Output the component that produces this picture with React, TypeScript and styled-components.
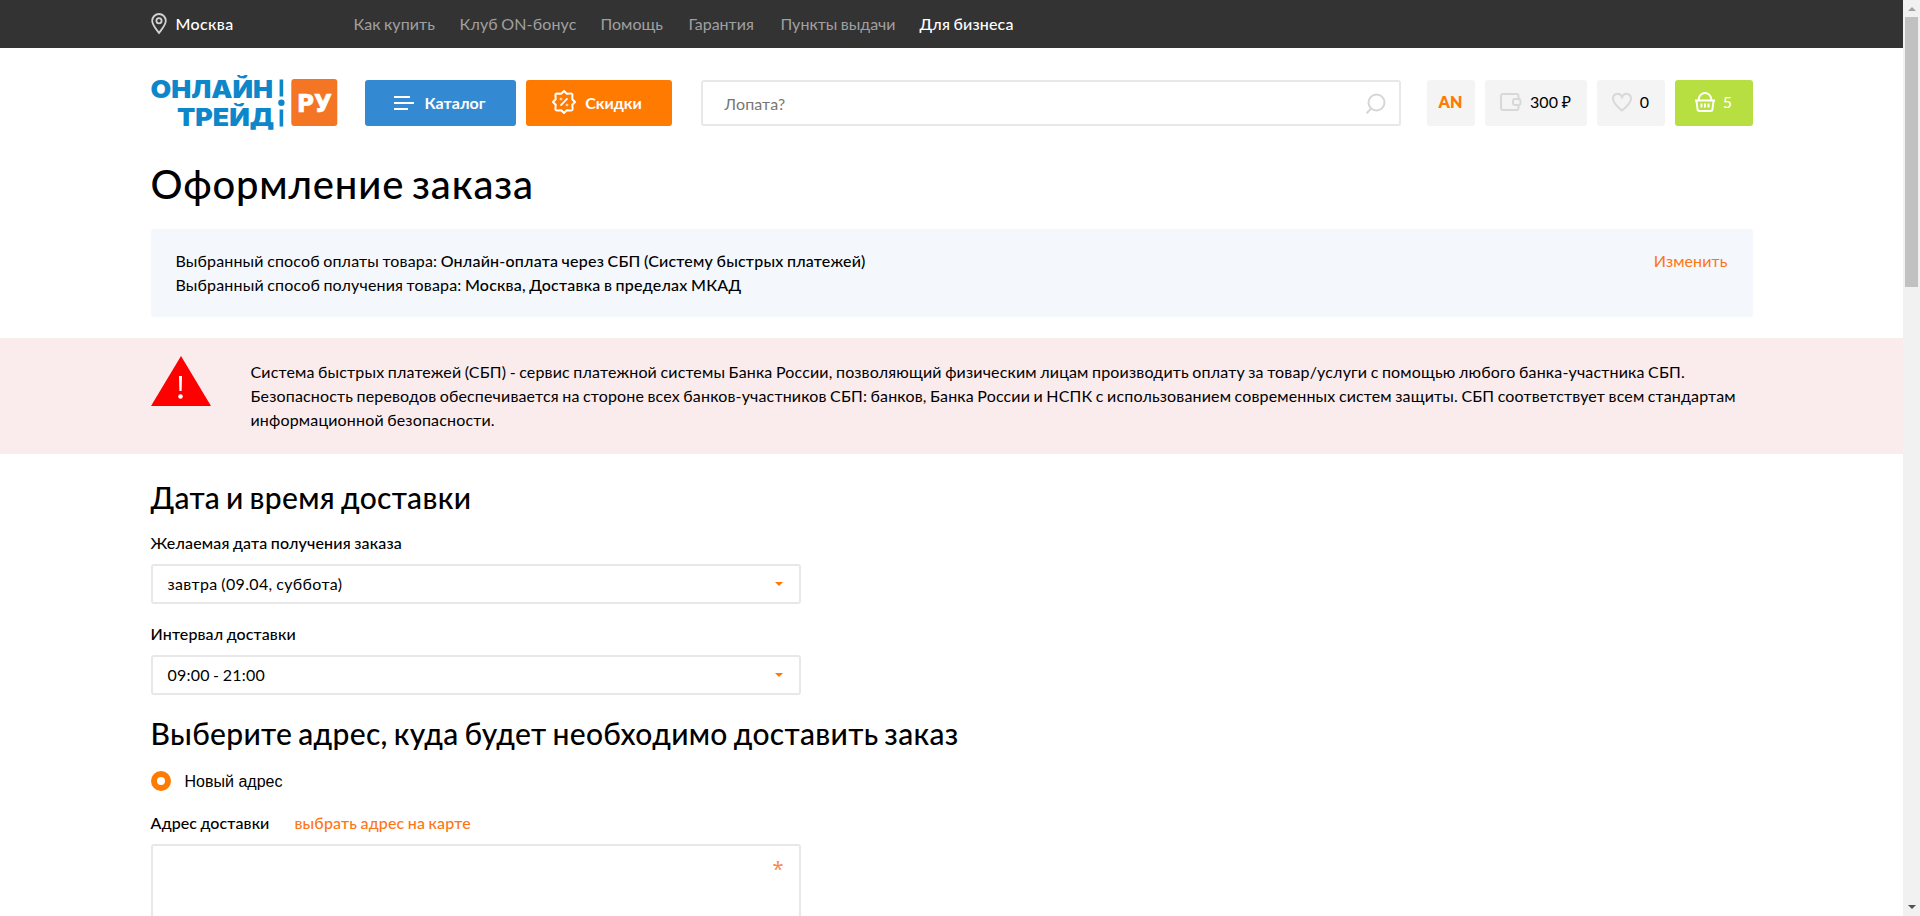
import React from 'react';
import styled, { createGlobalStyle, css } from 'styled-components';

const GlobalStyle = createGlobalStyle`
  * { box-sizing: border-box; }
  body { margin: 0; background: #fff; overflow: hidden; }
`;

const orange = '#ff7a00';

const Viewport = styled.div`
  display: flex;
  height: 916px;
  overflow: hidden;
  color: #000;
  font: 400 16px/24px Lato, 'Noto Sans', sans-serif;
  font-kerning: normal;
  word-spacing: -0.8px;
`;

const Page = styled.div`
  flex: 1;
  min-width: 0;
`;

const container = css`
  width: 1602px;
  margin-left: 150.5px;
`;

const Text = styled.span<{ $track?: number }>`
  letter-spacing: ${p => p.$track ?? 0.16}px;
  white-space: nowrap;
`;

const Strong = styled(Text)`
  font-weight: 500;
`;

/* ---------- top bar ---------- */

const TopBar = styled.div`
  height: 48px;
  background: #333;
`;

const TopBarInner = styled.div`
  ${container}
  display: flex;
  align-items: center;
  height: 48px;
`;

const City = styled.a`
  display: flex;
  align-items: center;
  gap: 9px;
  width: 203px;
  color: #fff;
  font-weight: 500;
`;

const TopNav = styled.nav`
  display: flex;
  gap: 24px;
`;

const TopLink = styled.a<{ $accent?: boolean; $width: number; $track: number }>`
  width: ${p => p.$width}px;
  letter-spacing: ${p => p.$track}px;
  color: ${p => (p.$accent ? '#fff' : '#a0a0a0')};
  font-weight: ${p => (p.$accent ? 500 : 400)};
  white-space: nowrap;
`;

/* ---------- header ---------- */

const Header = styled.header`
  ${container}
  display: flex;
  align-items: center;
  height: 110px;
`;

const Logo = styled.svg`
  display: block;
  margin-right: 27px;
`;

const MainButton = styled.button<{ $color: string; $width: number; $gap: number; $shift?: number }>`
  display: flex;
  align-items: center;
  justify-content: center;
  gap: ${p => p.$gap}px;
  width: ${p => p.$width}px;
  height: 46px;
  margin-right: 10px;
  padding: 0 ${p => p.$shift ?? 0}px 0 0;
  border: 0;
  border-radius: 3px;
  background: ${p => p.$color};
  color: #fff;
  font: 700 16px/24px Lato, sans-serif;
`;

const Search = styled.div`
  display: flex;
  align-items: center;
  justify-content: space-between;
  width: 700px;
  height: 46px;
  margin: 0 26px 0 19px;
  padding: 1px 13px 0 22px;
  border: 2px solid #e8e8e8;
  border-radius: 3px;
  color: #777;
`;

const Counters = styled.div`
  display: flex;
  gap: 10px;
`;

const Counter = styled.a<{ $width: number; $gap?: number; $kind?: 'cart' | 'user' }>`
  display: flex;
  align-items: center;
  justify-content: center;
  gap: ${p => p.$gap ?? 8}px;
  width: ${p => p.$width}px;
  height: 46px;
  padding-bottom: 2px;
  border-radius: 3px;
  background: ${p => (p.$kind === 'cart' ? '#b7df41' : '#f4f4f4')};
  color: ${p => (p.$kind === 'cart' ? '#fff' : p.$kind === 'user' ? orange : '#000')};
  font-weight: ${p => (p.$kind === 'user' ? 800 : 400)};
`;

/* ---------- order summary ---------- */

const Title = styled.h1`
  ${container}
  height: 71px;
  margin-top: 0;
  margin-bottom: 0;
  padding-top: 2px;
  font-size: 40px;
  line-height: 48px;
  font-weight: 500;
  word-spacing: -3px;
`;

const Summary = styled.section`
  ${container}
  display: flex;
  justify-content: space-between;
  height: 88px;
  margin-bottom: 21px;
  padding: 20px 25px;
  border-radius: 3px;
  background: #f4f7fb;
`;

const SummaryLine = styled.p`
  margin: 0;
`;

const ActionLink = styled.a<{ $bold?: boolean }>`
  color: #ff7514;
  font-weight: ${p => (p.$bold ? 500 : 400)};
`;

const Alert = styled.section`
  height: 116px;
  background: #faebec;
`;

const AlertInner = styled.div`
  ${container}
  display: flex;
  gap: 40px;
  padding-top: 18px;
`;

const AlertText = styled.p`
  margin: 4px 0 0;
`;

/* ---------- form ---------- */

const Form = styled.form`
  ${container}
  padding-top: 25px;
`;

const SectionTitle = styled.h2<{ $after: number }>`
  margin: 0 0 ${p => p.$after}px;
  font-size: 30px;
  line-height: 36px;
  font-weight: 500;
  word-spacing: -2px;
`;

const Field = styled.div<{ $after: number }>`
  width: 650px;
  margin-bottom: ${p => p.$after}px;
`;

const FieldLabel = styled.div`
  display: flex;
  gap: 25px;
  margin-bottom: 9px;
  font-weight: 500;
`;

const Select = styled.div`
  display: flex;
  align-items: center;
  justify-content: space-between;
  height: 40px;
  padding: 0 16px 0 15px;
  border: 2px solid #e8e8e8;
  border-radius: 3px;
`;

const Caret = styled.i`
  border: solid transparent;
  border-width: 4px 4px 0;
  border-top-color: ${orange};
`;

const RadioRow = styled.label`
  display: flex;
  align-items: center;
  gap: 14px;
  height: 24px;
  margin-bottom: 18px;
  font-family: 'Liberation Sans', sans-serif;
  word-spacing: 0;
`;

const RadioMark = styled.i`
  width: 20px;
  height: 20px;
  border: 6px solid ${orange};
  border-radius: 50%;
`;

const RadioText = styled(Text)`
  padding-top: 2px;
`;

const AddressBox = styled.div`
  display: flex;
  justify-content: flex-end;
  height: 110px;
  padding: 11px 15px;
  border: 2px solid #e8e8e8;
  border-radius: 3px;
  color: #f58a45;
  font: 400 20px/24px 'Noto Sans', sans-serif;
`;

/* ---------- page scrollbar ---------- */

const Scrollbar = styled.aside`
  display: flex;
  flex-direction: column;
  align-items: center;
  justify-content: space-between;
  width: 17px;
  padding: 7px 0;
  background: #f1f1f1;
`;

const ScrollThumb = styled.div`
  width: 13px;
  height: 270px;
  margin: 6px 0 auto;
  background: #c1c1c1;
`;

const ScrollArrow = styled.i<{ $down?: boolean }>`
  border: solid transparent;
  ${p =>
    p.$down
      ? css`border-width: 4px 4px 0; border-top-color: #505050;`
      : css`border-width: 0 4px 4px; border-bottom-color: #a3a3a3;`}
`;

const PinIcon = () => (
  <svg width="16" height="22" viewBox="0 0 16 22" fill="none" stroke="#d2d2d2" strokeWidth="1.8">
    <path d="M8 20C5 15.8 1.2 12 1.2 7.8a6.8 6.8 0 0 1 13.6 0C14.800 12 11 15.800 8 20Z" />
    <circle cx="8" cy="7.800" r="2.600" />
  </svg>
);

const MenuIcon = () => (
  <svg width="20" height="16" viewBox="0 0 20 16" fill="#fff">
    <path d="M0 1h16v2H0zM0 7h20v2H0zM0 13h14v2H0z" />
  </svg>
);

const PercentIcon = () => (
  <svg width="24" height="26" viewBox="0 0 24 26" fill="none" stroke="#fff" strokeWidth="2" strokeLinejoin="round" strokeLinecap="round">
    <path d="M12 1 L14.800 3.700 L18.800 3.400 Q20.600 3.400 20.400 5.200 L20.300 9.200 L23 12 L20.300 14.800 L20.600 18.800 Q20.600 20.600 18.800 20.500 L14.800 20.300 L12 23 L9.200 20.300 L5.200 20.500 Q3.400 20.600 3.400 18.800 L3.700 14.800 L1 12 L3.700 9.200 L3.400 5.200 Q3.400 3.400 5.200 3.400 L9.200 3.700 Z" />
    <path d="M15 8.800 9 15.200" strokeWidth="1.700" />
    <circle cx="9" cy="9" r=".35" />
    <circle cx="15" cy="15" r=".35" />
  </svg>
);

const SearchIcon = () => (
  <svg width="20" height="22" viewBox="0 0 20 22" fill="none" stroke="#d6d6d6" strokeWidth="2">
    <circle cx="10.500" cy="9.500" r="8" />
    <path d="m5 15.500-4.300 4.800" />
  </svg>
);

const WalletIcon = () => (
  <svg width="22" height="20" viewBox="0 0 22 20" fill="none" stroke="#d8d8d8" strokeWidth="2">
    <path d="M18.500 6.500V4a2 2 0 0 0-2-2H3a2 2 0 0 0-2 2v12a2 2 0 0 0 2 2h13.500a2 2 0 0 0 2-2v-2.500" />
    <rect x="13" y="7" width="7.500" height="6" rx="2" />
  </svg>
);

const HeartIcon = () => (
  <svg width="20" height="20" viewBox="0 0 20 20" fill="none" stroke="#d8d8d8" strokeWidth="2">
    <path d="M10 18.500C6 15 1 11.500 1 6.500 1 1 8 .2 10 5 12 .2 19 1 19 6.500c0 5-5 8.500-9 12Z" />
  </svg>
);

const BasketIcon = () => (
  <svg width="20" height="20" viewBox="0 0 20 20" fill="none" stroke="#fff" strokeWidth="2">
    <path d="M0 8.500h20M1.500 9l1 8a2 2 0 0 0 2 2h11a2 2 0 0 0 2-2l1-8M3.500 8C4 4 6.500 1 10 1s6 3 6.500 7M6.500 11.500v4M10 11.500v4M13.500 11.500v4" />
  </svg>
);

const WarningIcon = () => (
  <svg width="60" height="50" viewBox="0 0 60 50">
    <path d="M30 0 60 50H0Z" fill="#f00" />
    <path d="M28 20h3l-.4 15h-2.200Z" fill="#fff" />
    <circle cx="29.500" cy="40.500" r="2.300" fill="#fff" />
  </svg>
);

const Brand = () => (
  <Logo width="187" height="56" viewBox="0 0 187 56">
    <g fill="#0d87c9" fontFamily="Inter, sans-serif" fontWeight="900" fontSize="24.300">
      <text x="-0.500" y="22.500" textLength="122.500" lengthAdjust="spacingAndGlyphs">ОНЛАЙН</text>
      <text x="26" y="50.500" textLength="97" lengthAdjust="spacingAndGlyphs">ТРЕЙД</text>
      <path d="M128.600 4.500h3.600v17h-3.600zM128.600 34.500h3.600v17h-3.600z" />
      <circle cx="130.400" cy="27.700" r="3.200" />
    </g>
    <rect x="140.300" y="4" width="46" height="47" rx="3" fill="#f47524" />
    <text x="146" y="36.500" fill="#fff" stroke="#fff" strokeWidth=".7" fontFamily="DejaVu Sans, sans-serif" fontWeight="700" fontSize="24.500" textLength="35" lengthAdjust="spacingAndGlyphs">РУ</text>
  </Logo>
);

const links = [
  { label: 'Как купить', width: 82, track: 0.09 },
  { label: 'Клуб ON-бонус', width: 117, track: 0.15 },
  { label: 'Помощь', width: 64, track: 0 },
  { label: 'Гарантия', width: 68, track: 0 },
  { label: 'Пункты выдачи', width: 115, track: 0.02 },
  { label: 'Для бизнеса', width: 94, track: 0.17, accent: true },
];

export default function App() {
  return (
    <>
      <GlobalStyle />
      <Viewport>
        <Page>
          <TopBar>
            <TopBarInner>
              <City>
                <PinIcon />
                <Text $track={0.37}>Москва</Text>
              </City>
              <TopNav>
                {links.map(l => (
                  <TopLink key={l.label} $width={l.width} $track={l.track} $accent={l.accent}>{l.label}</TopLink>
                ))}
              </TopNav>
            </TopBarInner>
          </TopBar>

          <Header>
            <Brand />
            <MainButton $color="#338ad3" $width={151} $gap={10}>
              <MenuIcon />
              <Text $track={0.06}>Каталог</Text>
            </MainButton>
            <MainButton $color={orange} $width={146} $gap={9} $shift={3}>
              <PercentIcon />
              <Text $track={-0.05}>Скидки</Text>
            </MainButton>
            <Search>
              <Text $track={0.1}>Лопата?</Text>
              <SearchIcon />
            </Search>
            <Counters>
              <Counter $width={48} $kind="user">AN</Counter>
              <Counter $width={102}><WalletIcon /><Text $track={0.15}>300 ₽</Text></Counter>
              <Counter $width={68}><HeartIcon />0</Counter>
              <Counter $width={78} $kind="cart"><BasketIcon />5</Counter>
            </Counters>
          </Header>

          <Title><Text $track={0.82}>Оформление заказа</Text></Title>

          <Summary>
            <div>
              <SummaryLine>
                <Text $track={0.16}>Выбранный способ оплаты товара: </Text>
                <Strong $track={0.21}>Онлайн-оплата через СБП (Систему быстрых платежей)</Strong>
              </SummaryLine>
              <SummaryLine>
                <Text $track={0.17}>Выбранный способ получения товара: </Text>
                <Strong $track={0.22}>Москва, Доставка в пределах МКАД</Strong>
              </SummaryLine>
            </div>
            <ActionLink><Text $track={0.1}>Изменить</Text></ActionLink>
          </Summary>

          <Alert>
            <AlertInner>
              <WarningIcon />
              <AlertText>
                <Text $track={0.165}>Система быстрых платежей (СБП) - сервис платежной системы Банка России, позволяющий физическим лицам производить оплату за товар/услуги с помощью любого банка-участника СБП.</Text><br />
                <Text $track={0.157}>Безопасность переводов обеспечивается на стороне всех банков-участников СБП: банков, Банка России и НСПК с использованием современных систем защиты. СБП соответствует всем стандартам</Text><br />
                <Text>информационной безопасности.</Text>
              </AlertText>
            </AlertInner>
          </Alert>

          <Form>
            <SectionTitle $after={16}><Text $track={0.32}>Дата и время доставки</Text></SectionTitle>
            <Field $after={18}>
              <FieldLabel><Text>Желаемая дата получения заказа</Text></FieldLabel>
              <Select><Text $track={0.36}>завтра (09.04, суббота)</Text><Caret /></Select>
            </Field>
            <Field $after={20}>
              <FieldLabel><Text $track={0.12}>Интервал доставки</Text></FieldLabel>
              <Select><Text $track={0.2}>09:00 - 21:00</Text><Caret /></Select>
            </Field>
            <SectionTitle $after={18}><Text $track={0.33}>Выберите адрес, куда будет необходимо доставить заказ</Text></SectionTitle>
            <RadioRow><RadioMark /><RadioText $track={0.01}>Новый адрес</RadioText></RadioRow>
            <Field $after={0}>
              <FieldLabel>
                <Text $track={0.1}>Адрес доставки</Text>
                <ActionLink $bold><Text>выбрать адрес на карте</Text></ActionLink>
              </FieldLabel>
              <AddressBox>*</AddressBox>
            </Field>
          </Form>
        </Page>
        <Scrollbar>
          <ScrollArrow />
          <ScrollThumb />
          <ScrollArrow $down />
        </Scrollbar>
      </Viewport>
    </>
  );
}
